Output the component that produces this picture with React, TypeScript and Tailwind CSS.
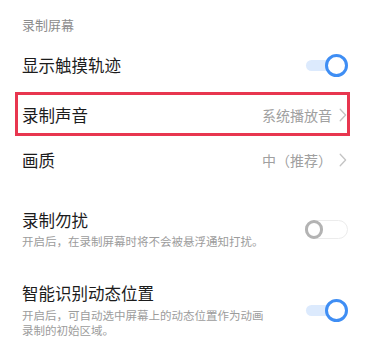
import React from "react";

function Chevron() {
  return (
    <svg width="8" height="14" viewBox="0 0 8 14" className="shrink-0">
      <path d="M1.2 1.2 L6.6 7 L1.2 12.8" fill="none" stroke="#c4c4c4" strokeWidth="1.3" strokeLinecap="round" strokeLinejoin="round" />
    </svg>
  );
}

function ToggleOn() {
  return (
    <div className="relative w-[42px] h-[23px] shrink-0 flex items-center">
      <div className="w-[34px] h-[11px] rounded-full bg-[#dceafd]" />
      <div className="absolute right-0 top-0 w-[23px] h-[23px] rounded-full bg-white border-[3px] border-[#3f8ef4]" />
    </div>
  );
}

function ToggleOff() {
  return (
    <div className="w-[43px] h-[19px] shrink-0 rounded-full border border-[#ececec] bg-white flex items-center">
      <div className="-ml-px w-[18px] h-[19px] rounded-full bg-white border-[3px] border-[#b3b3b3]" />
    </div>
  );
}

export default function App() {
  return (
    <div className="w-[372px] h-[340px] bg-white overflow-hidden font-['Noto_Sans_CJK_SC',sans-serif]">
      <div className="pl-[22px] pt-[17px] text-[13px] leading-[16px] text-[#8c8c8c]">录制屏幕</div>

      <div className="mt-[8px] h-[48px] flex items-center justify-between pl-[22px] pr-[24px]">
        <span className="text-[16.5px] leading-[22px] text-[#1c1c1c]">显示触摸轨迹</span>
        <ToggleOn />
      </div>

      <div className="relative h-[52px] flex items-center pl-[22px] pr-[25px]">
        <span className="text-[16.5px] leading-[22px] text-[#1c1c1c]">录制声音</span>
        <span className="ml-auto text-[14px] leading-[18px] text-[#a0a0a0]">系统播放音</span>
        <span className="ml-[7px]"><Chevron /></span>
        <div className="absolute left-[15px] right-[22px] top-[3px] h-[44px] border-[3.5px] border-[#e8364f]" />
      </div>

      <div className="h-[38px] flex items-center pl-[22px] pr-[25px]">
        <span className="text-[16.5px] leading-[22px] text-[#1c1c1c]">画质</span>
        <span className="ml-auto text-[14px] leading-[18px] text-[#a0a0a0]">中（推荐）</span>
        <span className="ml-[7px]"><Chevron /></span>
      </div>

      <div className="mt-[30px] flex items-center justify-between pl-[22px] pr-[24px]">
        <div className="flex flex-col">
          <span className="text-[16.5px] leading-[22px] text-[#1c1c1c]">录制勿扰</span>
          <span className="mt-[3px] text-[11.5px] leading-[15px] text-[#9c9c9c] w-[250px]">开启后，在录制屏幕时将不会被悬浮通知打扰。</span>
        </div>
        <ToggleOff />
      </div>

      <div className="mt-[33px] flex items-center justify-between pl-[22px] pr-[24px]">
        <div className="flex flex-col">
          <span className="text-[16.5px] leading-[22px] text-[#1c1c1c]">智能识别动态位置</span>
          <span className="mt-[4px] text-[11.5px] leading-[15px] text-[#9c9c9c] w-[250px]">开启后，可自动选中屏幕上的动态位置作为动画录制的初始区域。</span>
        </div>
        <ToggleOn />
      </div>
    </div>
  );
}
